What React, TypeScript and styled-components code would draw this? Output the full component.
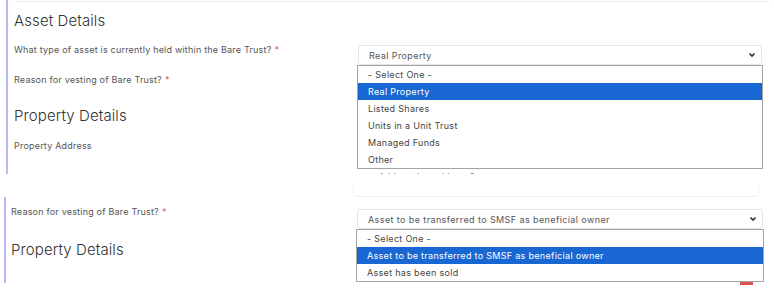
import styled, { createGlobalStyle } from "styled-components";

const GlobalStyle = createGlobalStyle`
  html, body {
    margin: 0;
    padding: 0;
    background: #fff;
  }
  body {
    font-family: Inter, "Liberation Sans", sans-serif;
    color: #555;
    -webkit-font-smoothing: antialiased;
  }
`;

const Page = styled.div`
  width: 774px;
  height: 297px;
  overflow: hidden;
  display: flex;
  flex-direction: column;
`;

/* ---------- shot one: asset details ---------- */

const ShotOne = styled.section`
  height: 174px;
  overflow: hidden;
  padding-left: 6px;
`;

const Panel = styled.div<{ $pad: number }>`
  position: relative;
  height: 100%;
  border-left: 2px solid #bcb6f4;
  padding-left: ${(p) => p.$pad}px;
  box-sizing: border-box;
`;

const CardEdge = styled.div`
  height: 1px;
  margin-right: 4px;
  border-bottom: 1px solid #ececec;
  border-radius: 0 0 4px 4px;
`;

const Heading = styled.h3<{ $top: number }>`
  margin: ${(p) => p.$top}px 0 0;
  font-size: 15px;
  line-height: 20px;
  font-weight: 300;
  letter-spacing: 0.1px;
  color: #333;
`;

const FieldRow = styled.div<{ $top: number; $cols: string }>`
  display: grid;
  grid-template-columns: ${(p) => p.$cols};
  align-items: start;
  margin-top: ${(p) => p.$top}px;
`;

const Label = styled.label`
  font-size: 9px;
  line-height: 10px;
  letter-spacing: 0.2px;
  color: #555;
`;

const Req = styled.span`
  color: #d9534f;
  margin-left: 3px;
`;

const SelectWrap = styled.div`
  position: relative;
`;

const SelectBox = styled.div`
  height: 20px;
  box-sizing: border-box;
  border: 1px solid #e6e6e6;
  border-radius: 3px;
  background: #fff;
  display: flex;
  align-items: center;
  justify-content: space-between;
  padding: 0 5px 0 10px;
  font-size: 9px;
  letter-spacing: 0.4px;
  color: #555;
`;

const Empty = styled.div`
  height: 20px;
`;

const Options = styled.ul`
  position: absolute;
  left: -1px;
  right: -1px;
  top: 100%;
  z-index: 2;
  margin: 0;
  padding: 0;
  list-style: none;
  background: #fff;
  border: 1px solid #a3a3a3;
`;

const Option = styled.li<{ $active?: boolean }>`
  height: 17px;
  line-height: 17px;
  padding-left: 10px;
  font-size: 9px;
  letter-spacing: 0.3px;
  color: ${(p) => (p.$active ? "#fff" : "#444")};
  background: ${(p) => (p.$active ? "#1967d2" : "transparent")};
`;

const Peek = styled.div`
  font-size: 9px;
  line-height: 12px;
  color: #3a86b8;
  padding-left: 12px;
`;

const Chevron = () => (
  <svg width="8" height="6" viewBox="0 0 8 6">
    <path d="M1.5 1.5 L4 4 L6.5 1.5" fill="none" stroke="#333" strokeWidth="1.7" />
  </svg>
);

type SelectProps = { value: string; options: string[]; open?: boolean };

function Select({ value, options, open }: SelectProps) {
  return (
    <SelectWrap>
      <SelectBox>
        <span>{value}</span>
        <Chevron />
      </SelectBox>
      {open && (
        <Options>
          {options.map((o) => (
            <Option key={o} $active={o === value}>
              {o}
            </Option>
          ))}
        </Options>
      )}
    </SelectWrap>
  );
}

const assetTypes = [
  "- Select One -",
  "Real Property",
  "Listed Shares",
  "Units in a Unit Trust",
  "Managed Funds",
  "Other",
];

const reasons = [
  "- Select One -",
  "Asset to be transferred to SMSF as beneficial owner",
  "Asset has been sold",
];

/* ---------- shot two: reason for vesting ---------- */

const ShotTwo = styled.section`
  display: flex;
  flex-direction: column;
`;

const Gap = styled.div`
  height: 23px;
  display: grid;
  grid-template-columns: 353px 406px;
  align-items: end;
`;

const BoxBottom = styled.div`
  grid-column: 2;
  height: 10px;
  border: 1px solid #efefef;
  border-top: none;
  border-radius: 0 0 4px 4px;
`;

const PanelTwo = styled.div`
  margin-left: 4px;
  height: 86px;
  border-left: 2px solid #bcb6f4;
  padding-left: 5px;
  display: grid;
  grid-template-columns: 346px 406px;
`;

const Stack = styled.div<{ $top: number }>`
  display: flex;
  flex-direction: column;
  padding-top: ${(p) => p.$top}px;
`;

const RemoveTab = styled.div`
  align-self: flex-end;
  margin: 53px 10px 0 0;
  width: 13px;
  height: 3px;
  background: #d9534f;
`;

export default function App() {
  return (
    <>
      <GlobalStyle />
      <Page>
        <ShotOne>
          <Panel $pad={6}>
            <CardEdge />
            <Heading $top={9}>Asset Details</Heading>
            <FieldRow $top={14} $cols="344px 404px">
              <Label>
                What type of asset is currently held within the Bare Trust?
                <Req>*</Req>
              </Label>
              <Select value="Real Property" options={assetTypes} open />
            </FieldRow>
            <FieldRow $top={10} $cols="344px 404px">
              <Label>
                Reason for vesting of Bare Trust?<Req>*</Req>
              </Label>
              <Empty />
            </FieldRow>
            <Heading $top={11}>Property Details</Heading>
            <FieldRow $top={15} $cols="344px 404px">
              <Label>Property Address</Label>
              <Empty />
            </FieldRow>
            <FieldRow $top={10} $cols="344px 404px">
              <span />
              <Peek>+ Add another address ?</Peek>
            </FieldRow>
          </Panel>
        </ShotOne>
        <ShotTwo>
          <Gap>
            <BoxBottom />
          </Gap>
          <PanelTwo>
            <Stack $top={10}>
              <Label>
                Reason for vesting of Bare Trust?<Req>*</Req>
              </Label>
              <Heading $top={23}>Property Details</Heading>
            </Stack>
            <Stack $top={12}>
              <Select
                value="Asset to be transferred to SMSF as beneficial owner"
                options={reasons}
                open
              />
              <RemoveTab />
            </Stack>
          </PanelTwo>
        </ShotTwo>
      </Page>
    </>
  );
}
